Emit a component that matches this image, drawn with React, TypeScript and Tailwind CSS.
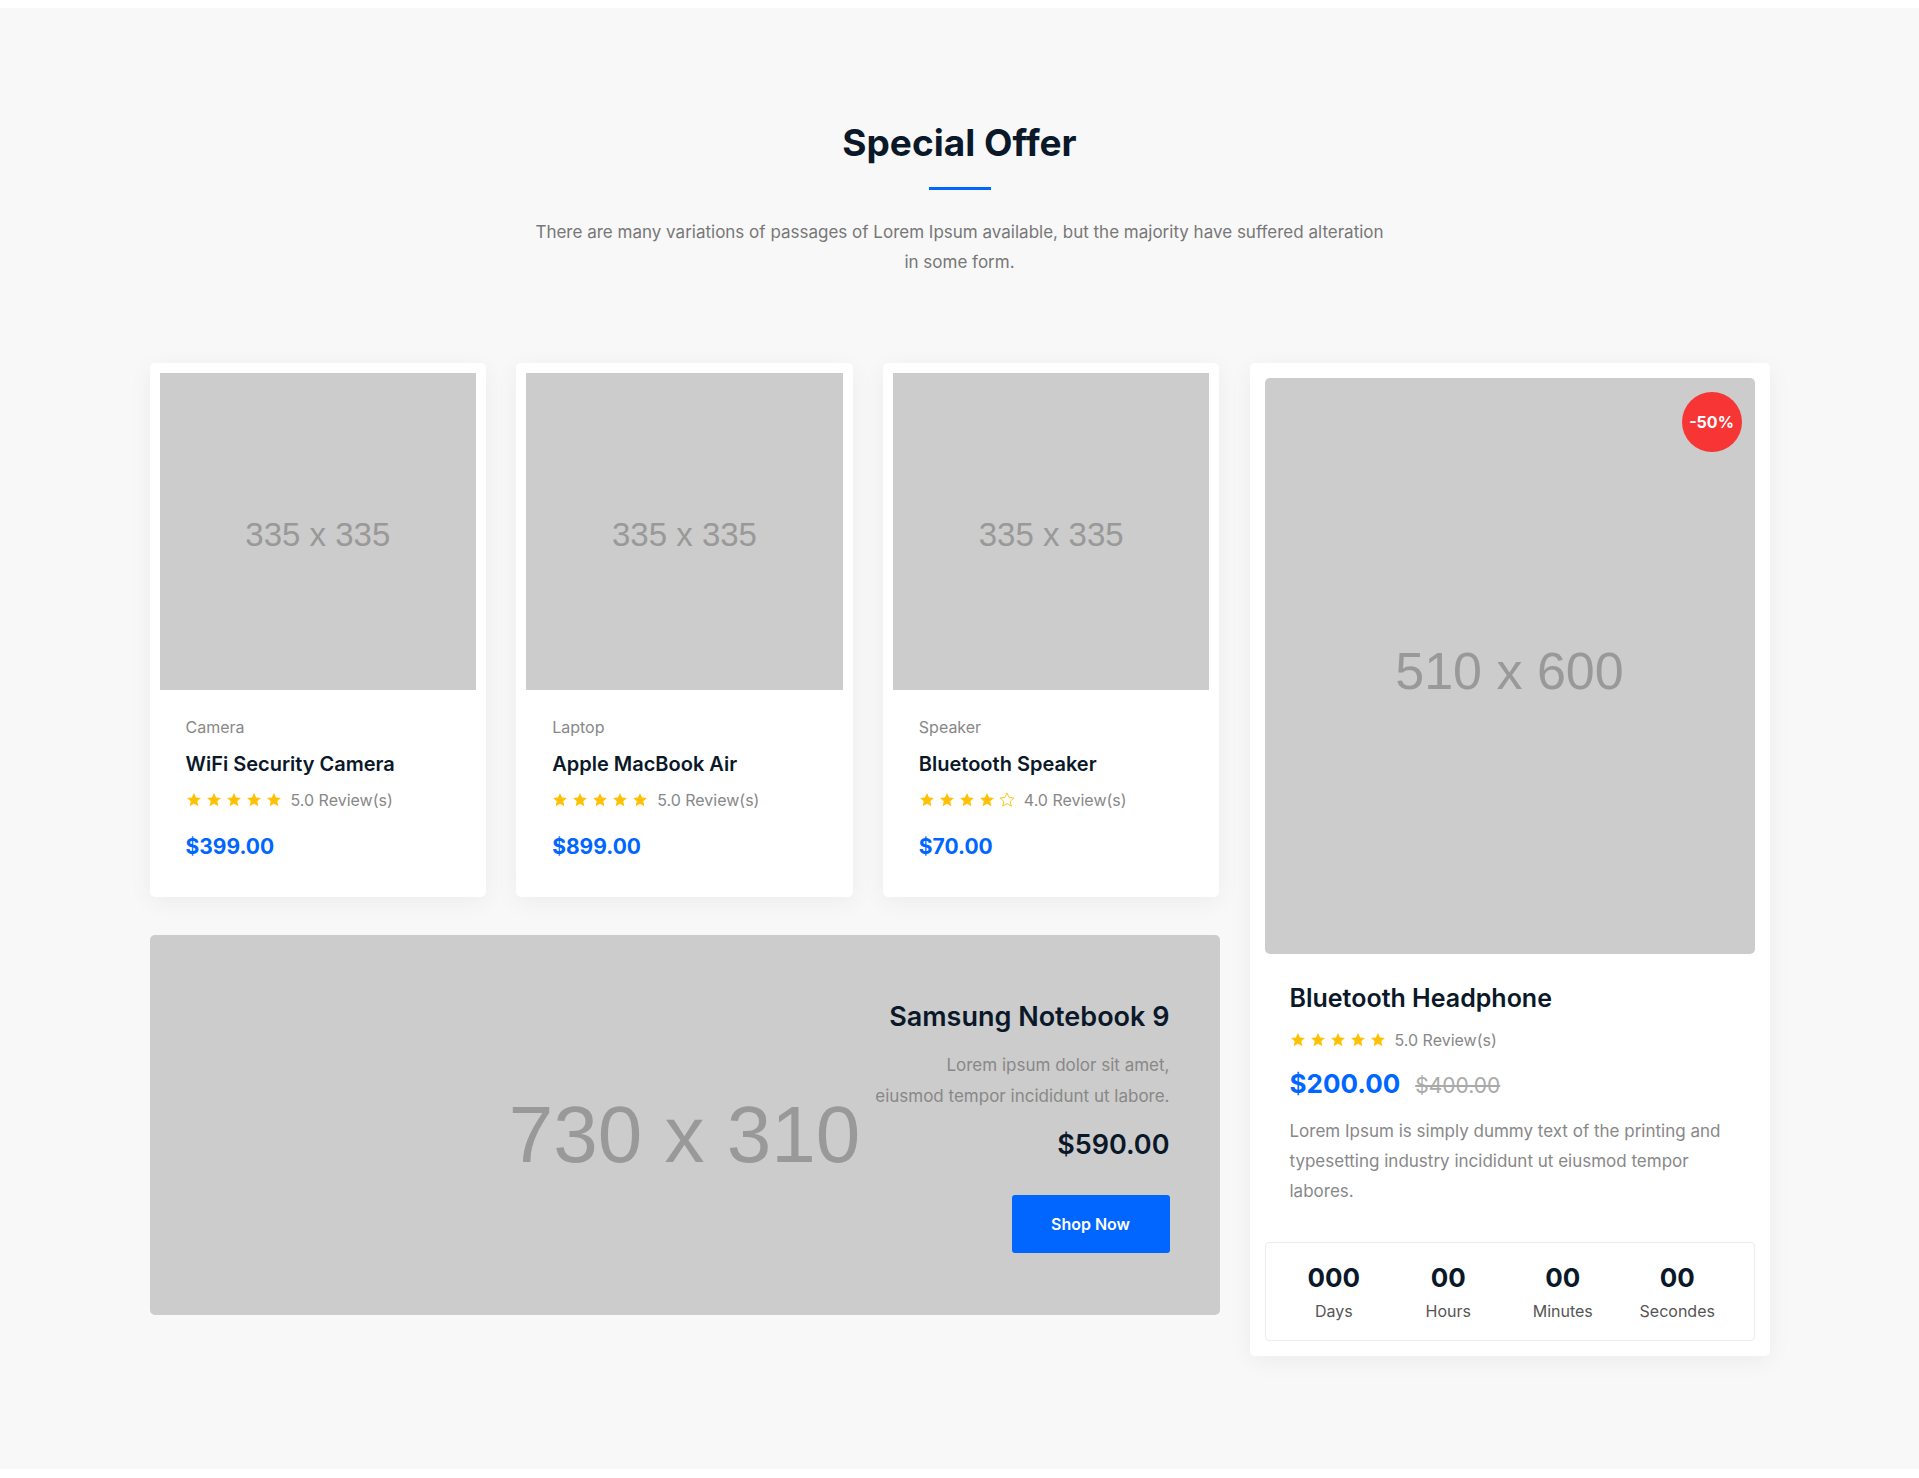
const products = [
  { category: "Camera", name: "WiFi Security Camera", rating: 5, price: "$399.00" },
  { category: "Laptop", name: "Apple MacBook Air", rating: 5, price: "$899.00" },
  { category: "Speaker", name: "Bluetooth Speaker", rating: 4, price: "$70.00" },
];

const countdown = [
  { value: "000", label: "Days" },
  { value: "00", label: "Hours" },
  { value: "00", label: "Minutes" },
  { value: "00", label: "Secondes" },
];

function Star({ filled = true }: { filled?: boolean }) {
  return (
    <svg
      viewBox="0 0 24 24"
      className="h-[16px] w-[16px]"
      fill={filled ? "#ffc107" : "none"}
      stroke="#ffc107"
      strokeWidth={filled ? 0 : 1.4}
      strokeLinejoin="round"
    >
      <polygon points="12,1.5 15.1,8.2 22.4,9 16.9,14 18.5,21.2 12,17.5 5.5,21.2 7.1,14 1.6,9 8.9,8.2" />
    </svg>
  );
}

function Rating({ value, className = "" }: { value: number; className?: string }) {
  return (
    <div className={`flex items-center ${className}`}>
      <div className="flex items-center gap-[4px]">
        {[1, 2, 3, 4, 5].map((i) => (
          <Star key={i} filled={i <= value} />
        ))}
      </div>
      <span className="ml-[9px] text-[16px] leading-[22px] text-[#888]">
        {value.toFixed(1)} Review(s)
      </span>
    </div>
  );
}

function ProductCard({ category, name, rating, price }: (typeof products)[number]) {
  return (
    <div className="rounded-[5px] bg-white p-[10px] shadow-[0_5px_25px_rgba(0,0,0,0.05)]">
      <div className="flex aspect-square items-center justify-center bg-[#cccccc] pt-[7px] font-['Liberation_Sans',Arial,sans-serif] text-[33px] text-[#999]">
        335 x 335
      </div>
      <div className="px-[26px] pb-[25px] pt-[25px]">
        <p className="text-[16px] leading-[24px] text-[#888]">{category}</p>
        <h3 className="mt-[11px] text-[20px] font-semibold leading-[28px] text-[#0a1829]">{name}</h3>
        <Rating value={rating} className="mt-[11px]" />
        <p className="mt-[21px] text-[21px] font-bold leading-[30px] text-[#0066ff]">{price}</p>
      </div>
    </div>
  );
}

export default function App() {
  return (
    <div className="min-h-screen bg-white pt-[8px] font-['Inter',sans-serif]">
      <section className="bg-[#f8f8f8] pb-[113px] pt-[112px]">
        <div className="mx-auto w-[1620px]">
          <div className="flex flex-col items-center text-center">
            <h2 className="text-[37px] font-bold leading-[46px] text-[#0a1829]">Special Offer</h2>
            <span className="mt-[21px] h-[3px] w-[62px] bg-[#0066ff]" />
            <p className="mt-[27px] max-w-[862px] text-[17px] leading-[30px] text-[#777]">
              There are many variations of passages of Lorem Ipsum available, but the majority have suffered alteration in some form.
            </p>
          </div>

          <div className="mt-[86px] grid grid-cols-[1070px_520px] items-start gap-[30px]">
            <div>
              <div className="grid grid-cols-3 gap-[30px]">
                {products.map((p) => (
                  <ProductCard key={p.name} {...p} />
                ))}
              </div>

              <div className="mt-[38px] grid h-[380px] overflow-hidden rounded-[5px] bg-[#cccccc]">
                <div className="col-start-1 row-start-1 flex items-center justify-center pt-[20px] font-['Liberation_Sans',Arial,sans-serif] text-[80px] text-[#999]">
                  730 x 310
                </div>
                <div className="col-start-1 row-start-1 flex flex-col items-end pr-[50px] pt-[65px] text-right">
                  <h3 className="text-[27px] font-semibold leading-[34px] text-[#0a1829]">Samsung Notebook 9</h3>
                  <p className="mt-[16px] text-[17px] leading-[31px] text-[#888]">
                    Lorem ipsum dolor sit amet,
                    <br />
                    eiusmod tempor incididunt ut labore.
                  </p>
                  <p className="mt-[16px] text-[27px] font-semibold leading-[34px] text-[#0a1829]">$590.00</p>
                  <a
                    href="#"
                    className="mt-[33px] flex h-[58px] w-[158px] items-center justify-center rounded-[3px] bg-[#0066ff] text-[16px] font-semibold text-white"
                  >
                    Shop Now
                  </a>
                </div>
              </div>
            </div>

            <div className="rounded-[5px] bg-white p-[15px] shadow-[0_5px_25px_rgba(0,0,0,0.05)]">
              <div className="relative flex aspect-[510/600] items-center justify-center rounded-[5px] bg-[#cccccc] pt-[10px] font-['Liberation_Sans',Arial,sans-serif] text-[52px] text-[#999]">
                510 x 600
                <span className="absolute right-[13px] top-[14px] flex h-[60px] w-[60px] items-center justify-center rounded-full bg-[#f83535] font-['Inter',sans-serif] text-[16px] font-bold text-white">
                  -50%
                </span>
              </div>
              <div className="px-[25px] pt-[27px]">
                <h3 className="text-[25px] font-semibold leading-[34px] text-[#0a1829]">Bluetooth Headphone</h3>
                <Rating value={5} className="mt-[14px]" />
                <div className="mt-[16px] flex items-baseline gap-[15px]">
                  <span className="text-[26px] font-bold leading-[34px] text-[#0066ff]">$200.00</span>
                  <span className="text-[21px] leading-[34px] text-[#aaa] line-through">$400.00</span>
                </div>
                <p className="mt-[13px] text-[17px] leading-[30px] text-[#888]">
                  Lorem Ipsum is simply dummy text of the printing and typesetting industry incididunt ut eiusmod tempor labores.
                </p>
              </div>
              <div className="mt-[36px] grid grid-cols-4 rounded-[4px] border border-[#ececec] pb-[17px] pl-[11px] pr-[19px] pt-[19px] text-center">
                {countdown.map((c) => (
                  <div key={c.label} className="flex flex-col items-center">
                    <span className="text-[26px] font-bold leading-[32px] text-[#0a1829]">{c.value}</span>
                    <span className="mt-[5px] text-[16px] leading-[24px] text-[#555]">{c.label}</span>
                  </div>
                ))}
              </div>
            </div>
          </div>
        </div>
      </section>
    </div>
  );
}
